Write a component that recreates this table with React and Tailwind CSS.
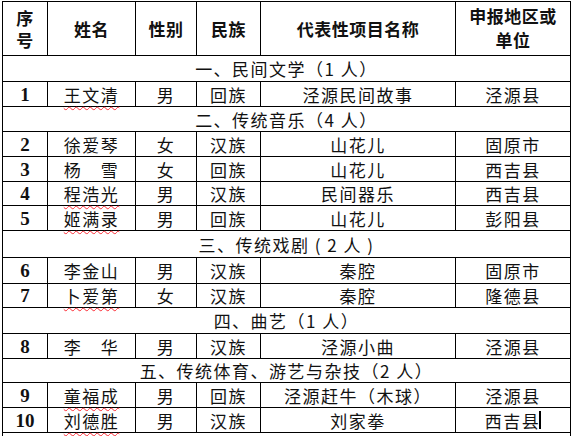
const body = '"Noto Sans CJK SC", "Liberation Sans", sans-serif'
const num = '"Liberation Serif", "Noto Sans CJK SC", serif'

const rows = [
  { section: '一、民间文学（1 人）', h: 'h-[26px]' },
  { no: '1', name: '王文清', wavy: true, sex: '男', nation: '回族', item: '泾源民间故事', area: '泾源县', h: 'h-[25px]' },
  { section: '二、传统音乐（4 人）', h: 'h-[25px]' },
  { no: '2', name: '徐爱琴', sex: '女', nation: '汉族', item: '山花儿', area: '固原市', h: 'h-[25px]' },
  { no: '3', name: '杨　雪', sex: '女', nation: '回族', item: '山花儿', area: '西吉县', h: 'h-[25px]' },
  { no: '4', name: '程浩光', wavy: true, sex: '男', nation: '汉族', item: '民间器乐', area: '西吉县', h: 'h-[24px]' },
  { no: '5', name: '姬满录', wavy: true, sex: '男', nation: '回族', item: '山花儿', area: '彭阳县', h: 'h-[25px]' },
  { section: '三、传统戏剧 ( 2 人 )', h: 'h-[27px]' },
  { no: '6', name: '李金山', sex: '男', nation: '汉族', item: '秦腔', area: '固原市', h: 'h-[26px]' },
  { no: '7', name: '卜爱第', wavy: true, sex: '女', nation: '汉族', item: '秦腔', area: '隆德县', h: 'h-[24px]' },
  { section: '四、曲艺（1 人）', h: 'h-[26px]' },
  { no: '8', name: '李　华', sex: '男', nation: '汉族', item: '泾源小曲', area: '泾源县', h: 'h-[25px]' },
  { section: '五、传统体育、游艺与杂技（2 人）', h: 'h-[24px]' },
  { no: '9', name: '童福成', wavy: true, sex: '男', nation: '回族', item: '泾源赶牛（木球）', area: '泾源县', h: 'h-[25px]' },
  { no: '10', name: '刘德胜', wavy: true, sex: '男', nation: '汉族', item: '刘家拳', area: '西吉县', cursor: true, h: 'h-[25px]' },
  { section: '六、传统美术（2 人）', h: 'h-[25px]' },
]

const cols = 'grid grid-cols-[45px_88px_61px_64px_195px_115px]'
const cell = 'flex items-center justify-center border-r border-black'

const App = () => {
  return (
    <div className="w-[573px] h-[436px] overflow-hidden bg-white">
      <div className="ml-[2px] mt-[1px] w-[569px] border-l border-t border-black text-[#111]" style={{ fontFamily: body }}>
        {/* header */}
        <div className={`${cols} h-[54px] border-b border-black font-bold text-[17px] leading-none tracking-[0.5px]`}>
          <div className={`${cell} flex-col gap-[5px]`}>
            <span>序</span>
            <span>号</span>
          </div>
          <div className={cell}>姓名</div>
          <div className={cell}>性别</div>
          <div className={cell}>民族</div>
          <div className={cell}>代表性项目名称</div>
          <div className={`${cell} flex-col gap-[7px] pb-[2px]`}>
            <span>申报地区或</span>
            <span>单位</span>
          </div>
        </div>

        {rows.map((r, i) =>
          r.section ? (
            <div key={i} className={`${r.h} flex items-center justify-center border-b border-r border-black text-[17px] leading-none tracking-[1.5px]`}>
              {r.section}
            </div>
          ) : (
            <div key={i} className={`${cols} ${r.h} border-b border-black text-[17px] leading-none tracking-[1.5px]`}>
              <div className={`${cell} font-bold text-[19px] tracking-normal`} style={{ fontFamily: num }}>
                {r.no}
              </div>
              <div className={cell}>
                <span className={r.wavy ? 'underline decoration-wavy decoration-red-500 decoration-1 underline-offset-[4px]' : ''}>
                  {r.name}
                </span>
              </div>
              <div className={cell}>{r.sex}</div>
              <div className={cell}>{r.nation}</div>
              <div className={cell}>{r.item}</div>
              <div className={cell}>
                <span>{r.area}</span>
                {r.cursor && <span className="inline-block w-[2px] h-[18px] bg-black -ml-[1px]" />}
              </div>
            </div>
          )
        )}
      </div>
    </div>
  )
}

export default App
